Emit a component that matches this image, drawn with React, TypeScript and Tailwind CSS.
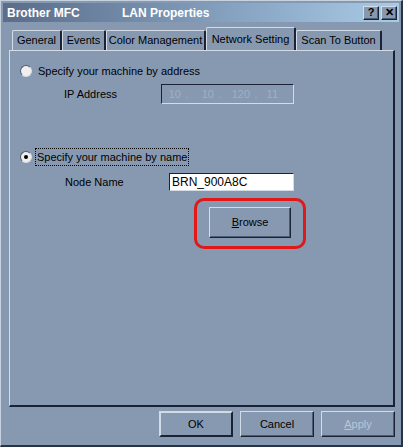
import React from "react";

const font = { fontFamily: '"Liberation Sans", Arial, sans-serif' };

function Tab({ label, active, w }: { label: string; active?: boolean; w: string }) {
  return (
    <div
      className={`${w} ${active ? "h-[23px] -mb-px z-10 bg-[#8799b1]" : "h-[20px] mt-[3px]"} flex items-center justify-center whitespace-nowrap border-t border-l border-[#d2dbe6] border-r-2 border-r-[#1b2233] rounded-t-[2px] text-[11px] text-black`}
    >
      {label}
    </div>
  );
}

function Btn({ children, className = "" }: { children: React.ReactNode; className?: string }) {
  return (
    <div
      className={`flex items-center justify-center whitespace-nowrap border border-t-[#d2dbe6] border-l-[#d2dbe6] border-r-[#1b2233] border-b-[#1b2233] shadow-[inset_-1px_-1px_0_#4f5d73] text-[11px] ${className}`}
    >
      {children}
    </div>
  );
}

function Radio({ checked }: { checked?: boolean }) {
  return (
    <div className="w-[12px] h-[12px] rounded-full bg-[#f2eeee] border border-t-[#4f5d73] border-l-[#4f5d73] border-r-[#d2dbe6] border-b-[#d2dbe6] flex items-center justify-center shrink-0">
      {checked && <div className="w-[4px] h-[4px] rounded-full bg-black" />}
    </div>
  );
}

export default function App() {
  return (
    <div style={font} className="w-[403px] h-[447px] bg-[#8799b1] flex flex-col border-l border-t border-[#c6d2e0] border-r-2 border-b-2 border-r-[#2a3346] border-b-[#2a3346] overflow-hidden">
      {/* Title bar */}
      <div className="mx-[2px] mt-[2px] h-[19px] flex items-center bg-gradient-to-r from-[#5a6d8a] via-[#7f9bb9] to-[#a9cbe6] pl-[4px] pr-[2px]">
        <span className="text-white font-bold text-[12px] w-[115px] whitespace-nowrap">Brother MFC</span>
        <span className="text-white font-bold text-[12px] whitespace-nowrap">LAN Properties</span>
        <div className="flex-1" />
        <Btn className="w-[16px] h-[14px] bg-[#8799b1] font-bold text-[11px] mr-[2px]">?</Btn>
        <Btn className="w-[16px] h-[14px] bg-[#8799b1] font-bold text-[11px]">✕</Btn>
      </div>

      {/* Tabs */}
      <div className="flex pl-[11px] mt-[5px] h-[23px] items-stretch relative">
        <Tab label="General" w="w-[50px]" />
        <Tab label="Events" w="w-[44px]" />
        <Tab label="Color Management" w="w-[100px]" />
        <Tab label="Network Setting" w="w-[90px]" active />
        <Tab label="Scan To Button" w="w-[86px]" />
      </div>

      {/* Panel */}
      <div className="ml-[8px] mr-[6px] h-[357px] border-l border-t border-[#d2dbe6] border-r-2 border-b-2 border-r-[#1b2233] border-b-[#1b2233] flex flex-col text-[11px] text-black">
        <div className="flex items-center gap-[6px] pl-[10px] mt-[13px] h-[14px]">
          <Radio />
          <span className="whitespace-nowrap">Specify your machine by address</span>
        </div>
        <div className="flex items-center mt-[6px] h-[20px]">
          <span className="pl-[54px] w-[151px] whitespace-nowrap">IP Address</span>
          <div className="w-[133px] h-[20px] border border-t-[#1b2233] border-l-[#1b2233] border-r-[#d2dbe6] border-b-[#d2dbe6] flex items-center text-[#9fb0c6] text-[11px]">
            <span className="w-[19px] text-right">10</span>
            <span className="w-[12px] text-center">.</span>
            <span className="w-[21px] text-right">10</span>
            <span className="w-[12px] text-center">.</span>
            <span className="w-[24px] text-right">120</span>
            <span className="w-[12px] text-center">.</span>
            <span className="w-[16px] text-right">11</span>
          </div>
        </div>

        <div className="flex items-center gap-[3px] pl-[10px] mt-[44px] h-[18px]">
          <Radio checked />
          <span className="border border-dotted border-black px-[1px] leading-[16px] whitespace-nowrap">Specify your machine by name</span>
        </div>
        <div className="flex items-center mt-[7px] h-[18px]">
          <span className="pl-[55px] w-[159px] whitespace-nowrap">Node Name</span>
          <div className="w-[125px] h-[18px] bg-white border border-t-[#1b2233] border-l-[#1b2233] border-r-[#d2dbe6] border-b-[#d2dbe6] flex items-center pl-[2px] text-[12px]">
            BRN_900A8C
          </div>
        </div>
        <div className="ml-[184px] mt-[7px] w-[112px] h-[51px] border-[3px] border-[#e01818] rounded-[10px] flex items-center justify-center">
          <Btn className="w-[82px] h-[31px] mt-[-3px]">
            <span><span className="underline">B</span>rowse</span>
          </Btn>
        </div>
      </div>

      {/* Bottom buttons */}
      <div className="flex justify-end gap-[7px] pr-[6px] mt-[4px]">
        <Btn className="w-[74px] h-[26px] border-2 border-black shadow-none">OK</Btn>
        <Btn className="w-[74px] h-[26px]">Cancel</Btn>
        <Btn className="w-[74px] h-[26px] text-[#b8c6d8]">
          <span><span className="underline">A</span>pply</span>
        </Btn>
      </div>
    </div>
  );
}
